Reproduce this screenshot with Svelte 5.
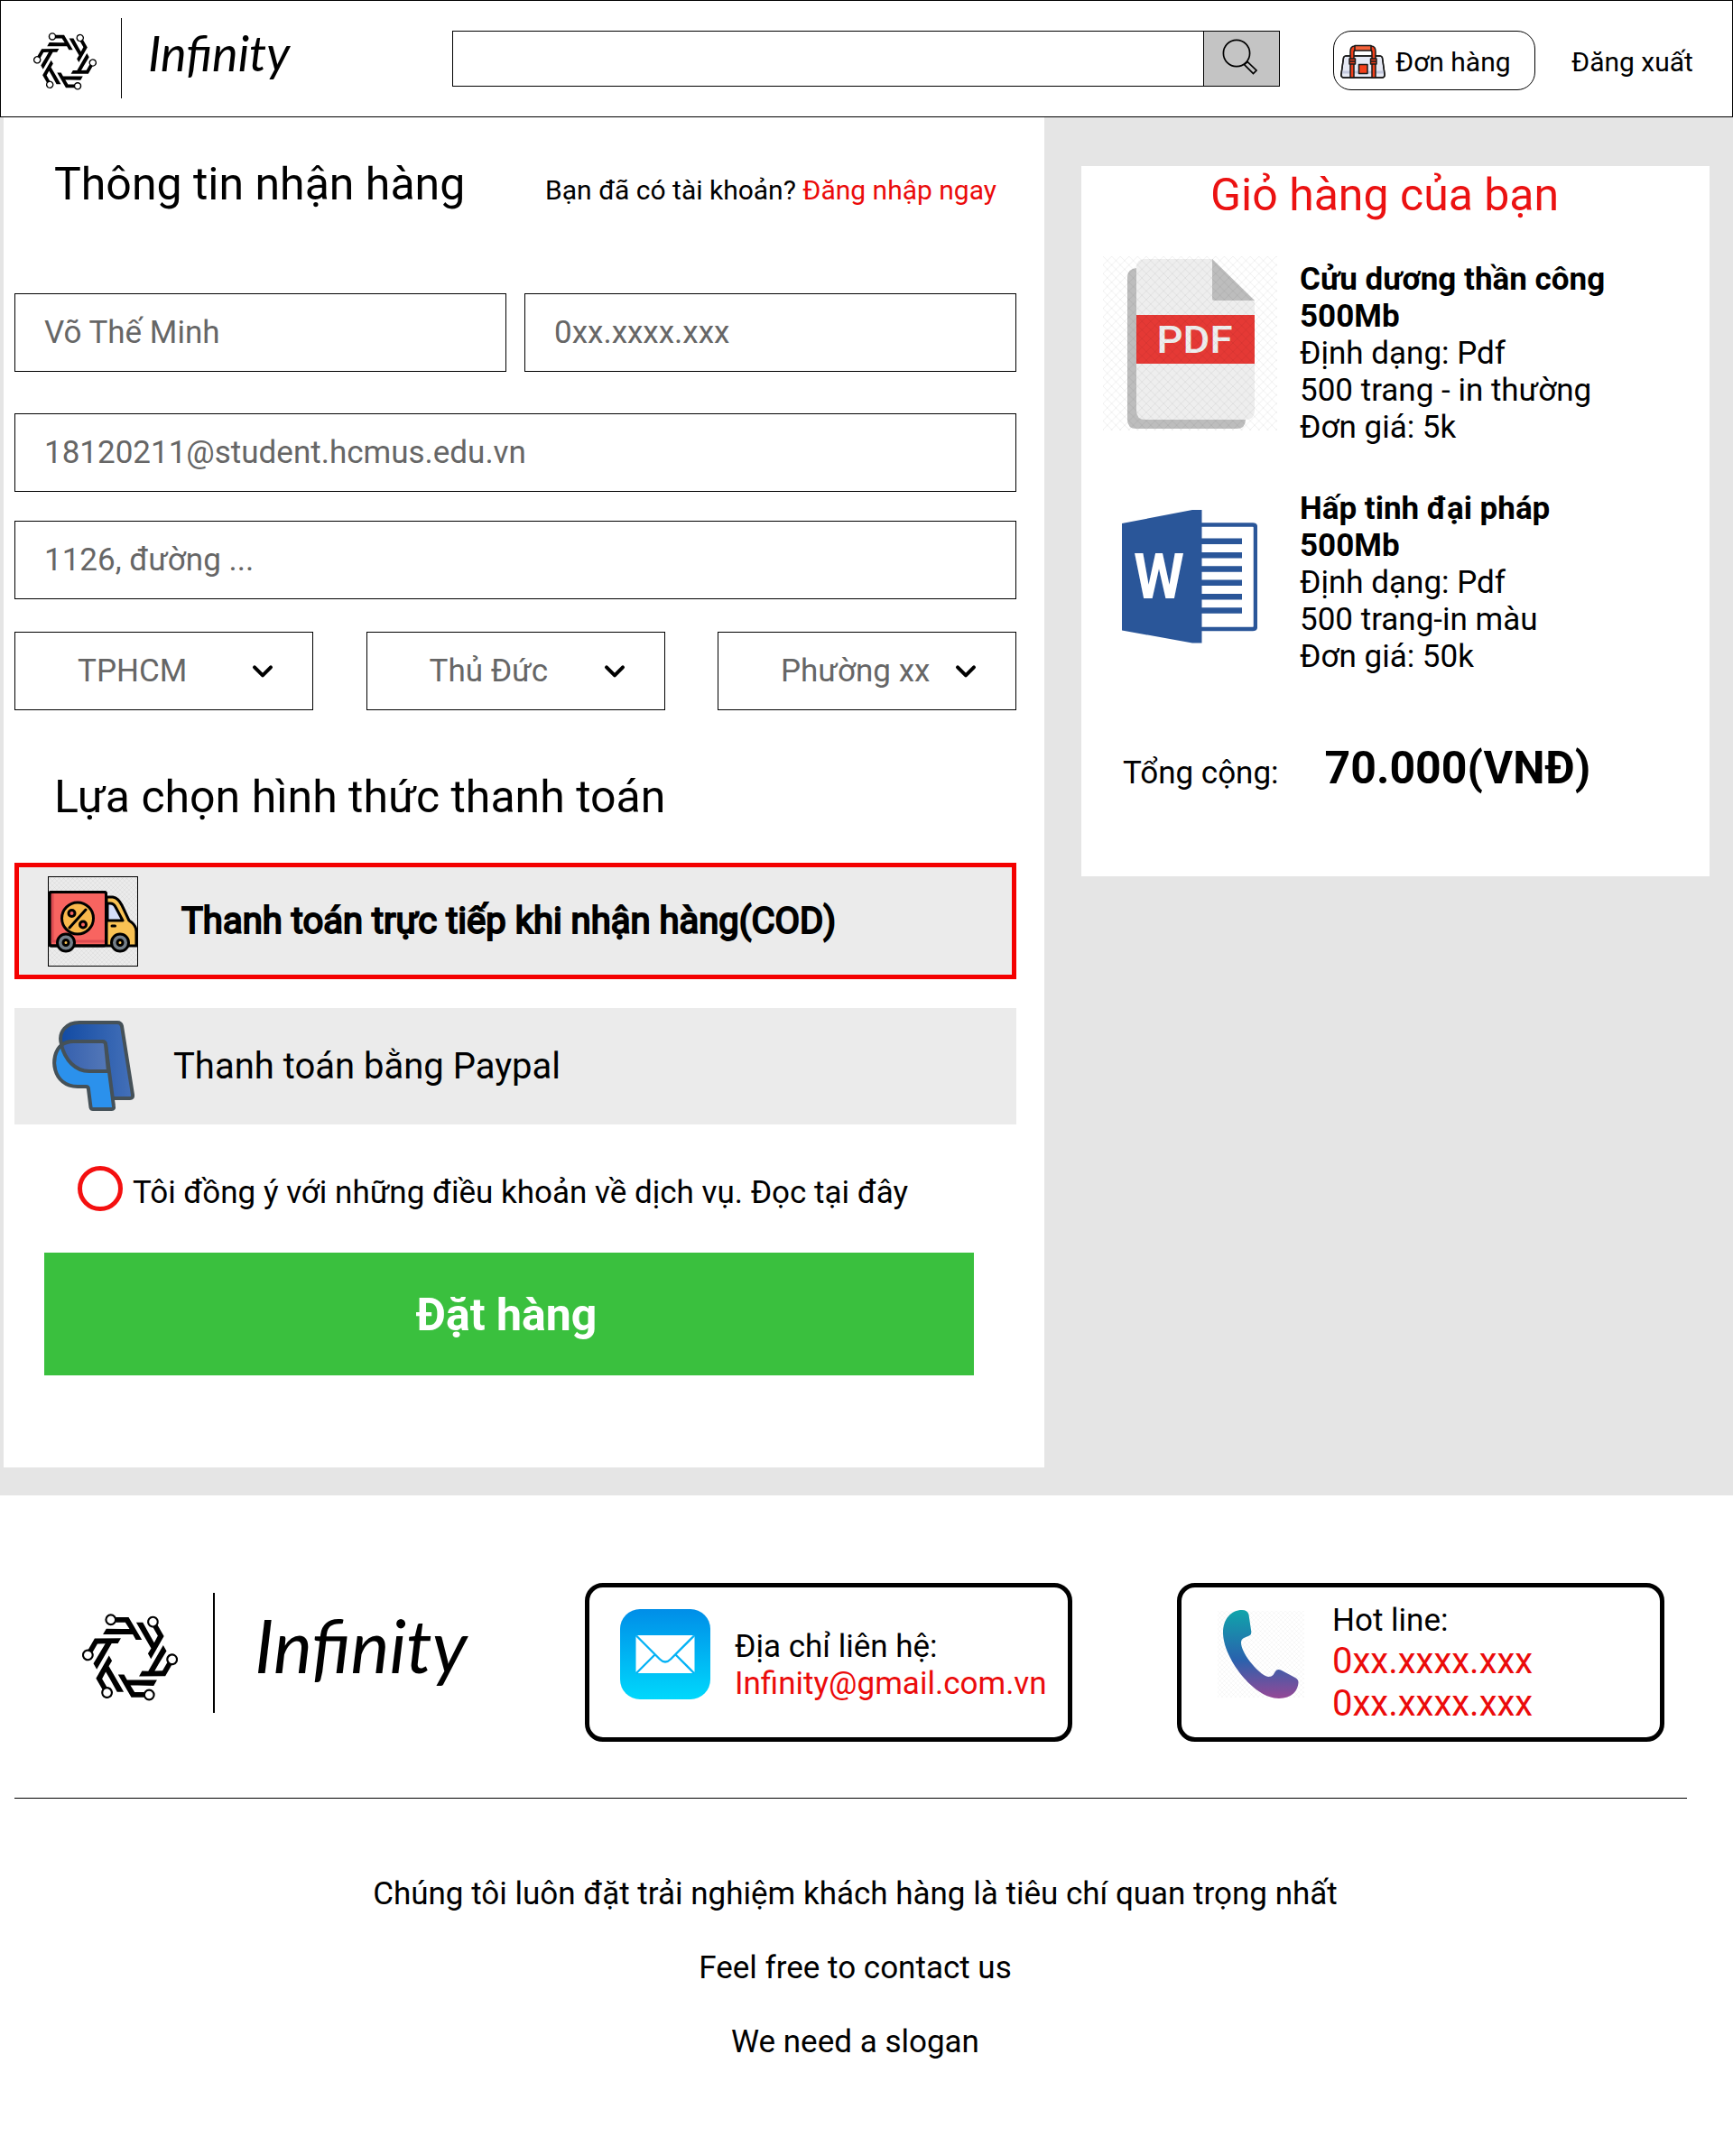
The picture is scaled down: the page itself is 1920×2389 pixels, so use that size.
<script>
  const districts = ['TPHCM', 'Thủ Đức', 'Phường xx'];
  const items = [
    { kind: 'pdf', name: 'Cửu dương thần công', size: '500Mb', lines: ['Định dạng: Pdf', '500 trang - in thường', 'Đơn giá: 5k'] },
    { kind: 'word', name: 'Hấp tinh đại pháp', size: '500Mb', lines: ['Định dạng: Pdf', '500 trang-in màu', 'Đơn giá: 50k'] }
  ];
  const arms = [0, 60, 120, 180, 240, 300];
  const slogans = ['Chúng tôi luôn đặt trải nghiệm khách hàng là tiêu chí quan trọng nhất', 'Feel free to contact us', 'We need a slogan'];
</script>

{#snippet emblem()}
  <svg class="emblem" viewBox="93 84 317 290">
    {#each arms as a}
      <g transform="rotate({a} 251.5 228.5)">
        <circle cx="188" cy="104" r="16" fill="none" stroke="#000" stroke-width="6.5" />
        <path d="M204 96H247L291 171H271L261 153H162L173 134L226 135H250L236 113H204Z" />
      </g>
    {/each}
  </svg>
{/snippet}

<div class="page">
  <header>
    {@render emblem()}
    <i class="rule"></i>
    <span class="brand">Infinity</span>
    <div class="search">
      <div class="box"></div>
      <button class="go" aria-label="Search">
        <svg width="40" height="40" viewBox="0 0 40 40" fill="none" stroke="#000" stroke-width="1.7">
          <circle cx="16" cy="16" r="14.6" />
          <path d="M24.5 28.5L28 25.5L38 35L34.500 38.500Z" />
        </svg>
      </button>
    </div>
    <button class="orders">
      <svg width="50" height="46" viewBox="0 0 50 46" stroke="#1a1a1a" stroke-width="1.5" stroke-linejoin="round">
        <path d="M6 18H44Q46 18 46.500 20L49 38Q49.500 42 46 42H4Q.5 42 1 38L3.500 20Q4 18 6 18Z" fill="#e6e9f4" />
        <path d="M2 36H48" stroke="#c3c9de" stroke-width="3" />
        <path d="M6 18H44Q46 18 46.500 20L49 38Q49.500 42 46 42H4Q.5 42 1 38L3.500 20Q4 18 6 18Z" fill="none" />
        <path d="M11 42V13Q11 7 16 7H34Q39 7 39 13V42H35V14Q35 11.500 33 11.500H17Q15 11.500 15 14V42Z" fill="#f4401a" />
        <path d="M16 6.500H34V12H16Z" fill="#f4623a" />
        <path d="M10 21H16.500V27H10ZM33.500 21H40V27H33.500ZM10 24H16.500M33.500 24H40" fill="#e83c1c" />
        <path d="M20.500 27.500H30V37.500H20.500Z" fill="#f4401a" />
      </svg>
      <span>Đơn hàng</span>
    </button>
    <span class="logout">Đăng xuất</span>
  </header>

  <main>
    <section class="form">
      <div class="head">
        <h2>Thông tin nhận hàng</h2>
        <p>Bạn đã có tài khoản? <a>Đăng nhập ngay</a></p>
      </div>
      <div class="pair">
        <div class="field">Võ Thế Minh</div>
        <div class="field">0xx.xxxx.xxx</div>
      </div>
      <div class="field mail">18120211@student.hcmus.edu.vn</div>
      <div class="field street">1126, đường ...</div>
      <div class="selects">
        {#each districts as d}
          <div class="field select">
            <span>{d}</span>
            <svg width="24" height="16" viewBox="0 0 24 16" fill="none" stroke="#000" stroke-width="4" stroke-linecap="round" stroke-linejoin="round"><path d="M3 3.300L12 12.300L21 3.300" /></svg>
          </div>
        {/each}
      </div>
      <h2 class="pay-title">Lựa chọn hình thức thanh toán</h2>
      <div class="method active">
        <svg class="truck" width="98" height="98" viewBox="1 1 98 98" stroke="#000" stroke-width="3" stroke-linejoin="round" stroke-linecap="round">
          <defs><pattern id="hatch-truck" width="5" height="5" patternUnits="userSpaceOnUse"><path d="M0 0L5 5M5 0L0 5" stroke="#000" stroke-opacity=".06" stroke-width=".7" /></pattern></defs>
          <rect width="100" height="100" fill="url(#hatch-truck)" stroke="none" />
          <path d="M65 23H72Q78 24 82 32L90 49Q98 54 98 61V77H65Z" fill="#f9c253" />
          <path d="M66 30H69Q73 30 75 34L83 49H66Z" fill="#d5def9" />
          <rect x="2" y="17.500" width="62.500" height="59.500" rx="2" fill="#f86460" />
          <path d="M4 72H63M5 20V72" stroke="#dc4b50" stroke-width="3" />
          <rect x="2" y="17.500" width="62.500" height="59.500" rx="2" fill="none" />
          <circle cx="33" cy="46.500" r="17.500" fill="#f9b84c" />
          <path d="M42 37L24 57M71 55H74.500" />
          <g fill="#f86460"><circle cx="26.500" cy="41" r="3.500" /><circle cx="39" cy="53.500" r="3.500" /></g>
          <circle cx="20" cy="73.500" r="9.500" fill="#75808a" /><circle cx="20" cy="73.500" r="3" fill="#f9c253" />
          <circle cx="80" cy="73.500" r="9.500" fill="#75808a" /><circle cx="80" cy="73.500" r="3" fill="#f9c253" />
        </svg>
        <span class="cod">Thanh toán trực tiếp khi nhận hàng(COD)</span>
      </div>
      <div class="method">
        <svg class="paypal" width="92" height="100" viewBox="0 0 92 100" stroke="#455158" stroke-width="4" stroke-linejoin="round">
          <defs>
            <linearGradient id="pp-dark"><stop stop-color="#124ba4" /><stop offset="1" stop-color="#4470b8" /></linearGradient>
            <linearGradient id="pp-mid"><stop stop-color="#3560ae" /><stop offset="1" stop-color="#5478b8" /></linearGradient>
          </defs>
          <path d="M11 26C7 12 17 2 31 2H73Q77 2 78 6L90 82Q90.500 86 87 86H60L20 40Z" fill="url(#pp-dark)" />
          <path d="M11 27C-3 39 1 73 29 73H38Q41 73 41 76L43.500 96Q44 98 46 98H67Q69.500 98 69 95L60 26Q59.500 23 56 23H24Q17 23 11 27Z" fill="#2b91ec" />
          <path d="M11 27Q17 23 24 23H56Q59.500 23 60 26L63 56H42C26 56 15 43 11 27Z" fill="url(#pp-mid)" />
        </svg>
        <span>Thanh toán bằng Paypal</span>
      </div>
      <div class="terms"><i></i><span>Tôi đồng ý với những điều khoản về dịch vụ. Đọc tại đây</span></div>
      <button class="submit">Đặt hàng</button>
    </section>

    <aside>
      <h2>Giỏ hàng của bạn</h2>
      {#each items as it}
        <article>
          <div class="thumb">
            {#if it.kind === 'pdf'}
              <svg width="193" height="193" viewBox="0 0 193 193">
                <defs>
                  <pattern id="hatch" width="9.600" height="9.600" patternUnits="userSpaceOnUse"><path d="M0 0L9.600 9.600M9.600 0L0 9.600" stroke="#000" stroke-opacity=".08" stroke-width=".8" /></pattern>
                </defs>
                <path d="M37 13Q27 14 27 23V181Q27 191 37 191H148Q158 191 158 181V100H37Z" fill="#bdbdbd" />
                <path d="M46 3H121L168 49V171Q168 181 158 181H47Q37 181 37 171V13Q37 3 46 3Z" fill="#eee" />
                <path d="M121 3L168 49H123Q121 49 121 47Z" fill="#bdbdbd" />
                <rect x="37" y="65" width="131" height="54" fill="#e53935" />
                <text x="59.500" y="107" textLength="84" lengthAdjust="spacingAndGlyphs" class="pdf">PDF</text>
                <rect width="193" height="193" fill="url(#hatch)" />
              </svg>
            {:else}
              <svg class="word" width="150" height="148" viewBox="0 0 150 148">
                <path d="M86 16.500H145Q148 16.500 148 19.500V129Q148 132 145 132H86" fill="#fff" stroke="#2a5699" stroke-width="4.500" />
                <path d="M86 34.800H133M86 50.200H133M86 65.500H133M86 80.800H133M86 96.200H133M86 111.500H133" stroke="#2a5699" stroke-width="6.500" />
                <path d="M0 15L78 0H88.500V147.500H78L0 133.500Z" fill="#2a5699" />
                <text x="13" y="98" textLength="56" lengthAdjust="spacingAndGlyphs" class="w">W</text>
              </svg>
            {/if}
          </div>
          <div class="info">
            <b>{it.name}</b>
            <b>{it.size}</b>
            {#each it.lines as l}<span>{l}</span>{/each}
          </div>
        </article>
      {/each}
      <div class="total"><span>Tổng cộng:</span><b>70.000(VNĐ)</b></div>
    </aside>
  </main>

  <footer>
    <div class="top">
      {@render emblem()}
      <i class="rule"></i>
      <span class="brand">Infinity</span>
      <div class="card contact">
        <svg width="100" height="100" viewBox="0 0 100 100">
          <defs><linearGradient id="mail" x2="0" y2="1"><stop stop-color="#008ee8" /><stop offset="1" stop-color="#00d8fc" /></linearGradient></defs>
          <rect width="100" height="100" rx="22" fill="url(#mail)" />
          <rect x="17.500" y="29" width="65" height="42" rx="2" fill="#fff" />
          <path d="M18 29.500L44 55.500Q50 61.500 56 55.500L82 29.500M18 71L38 51M82 71L62 51" fill="none" stroke="#04b2f5" stroke-width="2.300" />
        </svg>
        <p>Địa chỉ liên hệ:<br /><a>Infinity@gmail.com.vn</a></p>
      </div>
      <div class="card hotline">
        <svg width="96" height="98" viewBox="0 -1 96 98">
          <defs>
            <linearGradient id="call" x2="0" y2="1"><stop stop-color="#10a5ab" /><stop offset=".56" stop-color="#2962ad" /><stop offset="1" stop-color="#954896" /></linearGradient>
            <pattern id="hatch-call" width="5" height="5" patternUnits="userSpaceOnUse"><path d="M0 0L5 5M5 0L0 5" stroke="#000" stroke-opacity=".045" stroke-width=".7" /></pattern>
          </defs>
          <rect width="96" height="96" fill="url(#hatch-call)" />
          <path fill="url(#call)" d="M27 -1C15 -1 6 9 6 24C6 52 40 97 68 97C82 97 89.500 88 89.500 79Q89.500 76 86 74L71 66Q66 63.500 64 67L61.500 71Q58 74.500 53 72C42 66 26 46 26 35Q26 31.500 29 30L35 27.500Q37.500 26.500 37.300 23L34.500 4Q33 -1 27 -1Z" />
        </svg>
        <p>Hot line:<a>0xx.xxxx.xxx</a><a>0xx.xxxx.xxx</a></p>
      </div>
    </div>
    <div class="slogans">
      {#each slogans as s}<p>{s}</p>{/each}
    </div>
  </footer>
</div>

<style>
  :global(body) { margin: 0; background: #fff; }
  * { box-sizing: border-box; }
  .page { width: 1920px; height: 2389px; font-family: Roboto, "Liberation Sans", sans-serif; font-size: 35px; line-height: 41px; color: #000; white-space: nowrap; overflow: hidden; }
  h2, p { margin: 0; font-weight: 400; }
  h2 { font-size: 50px; line-height: 58px; }
  svg { display: block; flex: none; }
  button { font: inherit; color: inherit; padding: 0; border-radius: 0; }
  a { color: #eb0b0b; }
  .rule { flex: none; background: #000; }
  .brand { font-family: Lato, sans-serif; font-style: italic; flex: none; }

  header { display: flex; align-items: flex-start; height: 130px; border: 1px solid #000; background: #fff; }
  header .emblem { width: 70px; height: 64px; margin: 35px 0 0 36px; }
  header .rule { width: 1px; height: 89px; margin: 19px 0 0 27px; }
  header .brand { width: 337px; margin: 23px 0 0 29px; font-size: 54px; line-height: 70px; }
  .search { display: flex; width: 917px; height: 62px; margin-top: 33px; border: 1px solid #000; }
  .box { flex: 1; }
  .go { display: flex; align-items: flex-start; width: 84px; border: 0; border-left: 1px solid #000; background: #c4c4c4; padding: 8px 0 0 20px; }
  .orders { display: flex; align-items: center; width: 224px; height: 66px; margin: 33px 0 0 59px; padding-left: 7px; border: 1px solid #000; border-radius: 20px; background: #fff; font-size: 30px; line-height: 35px; }
  .orders span { margin: 2px 0 0 11px; }
  .logout { margin: 50px 0 0 40px; font-size: 30px; line-height: 35px; }

  main { display: flex; align-items: flex-start; height: 1527px; padding-left: 4px; background: #e5e5e5; }
  .form { width: 1153px; height: 1496px; padding: 45px 31px 0 12px; background: #fff; }
  .head { display: flex; align-items: baseline; justify-content: space-between; height: 150px; padding: 0 22px 0 44px; }
  .head p { font-size: 30px; line-height: 35px; }
  .pair { display: flex; gap: 20px; }
  .field { flex: 1; display: flex; align-items: center; height: 87px; padding: 0 0 1px 32px; border: 1px solid #000; color: #666; }
  .mail { margin-top: 46px; }
  .street { margin-top: 32px; }
  .selects { display: flex; gap: 58.5px; margin-top: 36px; }
  .selects .select { padding: 0 43px 0 69px; justify-content: space-between; }
  .pay-title { margin: 67px 0 44px 44px; }
  .method { display: flex; align-items: center; height: 129px; background: #ebebeb; font-size: 40px; line-height: 47px; }
  .method + .method { margin-top: 32px; }
  .active { border: 5px solid #f40000; }
  .truck { box-sizing: content-box; margin-left: 32px; border: 1px solid #000; }
  .cod { margin-left: 48px; -webkit-text-stroke: 2px #000; }
  .paypal { margin: -2px 43px 0 41px; }
  .terms { display: flex; align-items: center; height: 50px; margin: 46px 0 46px 70px; }
  .terms i { width: 50px; height: 50px; margin-right: 11px; border: 5px solid #f41010; border-radius: 50%; }
  .terms span { padding-top: 9px; }
  .submit { display: block; width: 1030px; height: 136px; margin-left: 33px; padding: 2px 6px 0 0; border: 0; background: #3ac03e; color: #fff; font-size: 50px; font-weight: 700; }

  aside { width: 696px; height: 787px; margin: 54px 0 0 41px; padding-top: 3px; background: #fff; }
  aside h2 { margin: 0 0 44px 143px; color: #eb1212; }
  article { display: flex; height: 254px; }
  .thumb { width: 242px; padding: 0 0 0 24px; margin-top: -5px; }
  .word { margin: 27px 0 0 21px; }
  .info { display: flex; flex-direction: column; }
  .pdf { font: 500 42px Roboto, sans-serif; fill: #eee; }
  .w { font: 700 70px Roboto, sans-serif; fill: #fff; }
  .total { display: flex; align-items: baseline; padding: 25px 0 0 46px; }
  .total b { margin-left: 51px; font-size: 50px; line-height: 58px; }

  .top { display: flex; align-items: flex-start; width: 1853px; height: 336px; margin-left: 16px; padding: 97px 0 0 75px; border-bottom: 1px solid #000; }
  .top .emblem { width: 106px; height: 97px; margin-top: 34px; }
  .top .rule { width: 2px; height: 133px; margin: 11px 0 0 39px; }
  .top .brand { width: 366px; margin: 19px 0 0 44px; font-size: 81px; line-height: 100px; }
  .card { display: flex; align-items: flex-start; flex: none; width: 540px; height: 176px; border: 5px solid #000; border-radius: 20px; background: #fff; }
  .contact { padding: 24px 0 0 34px; }
  .contact p { margin: 21px 0 0 27px; }
  .hotline { margin-left: 116px; padding: 25px 0 0 40px; }
  .hotline p { margin: -9px 0 0 31px; }
  .hotline a { display: block; font-size: 40px; line-height: 47px; }
  .hotline a:first-of-type { margin-top: 1px; }
  .slogans { display: flex; flex-direction: column; gap: 41px; margin: 85px 25px 0 0; text-align: center; }
</style>
